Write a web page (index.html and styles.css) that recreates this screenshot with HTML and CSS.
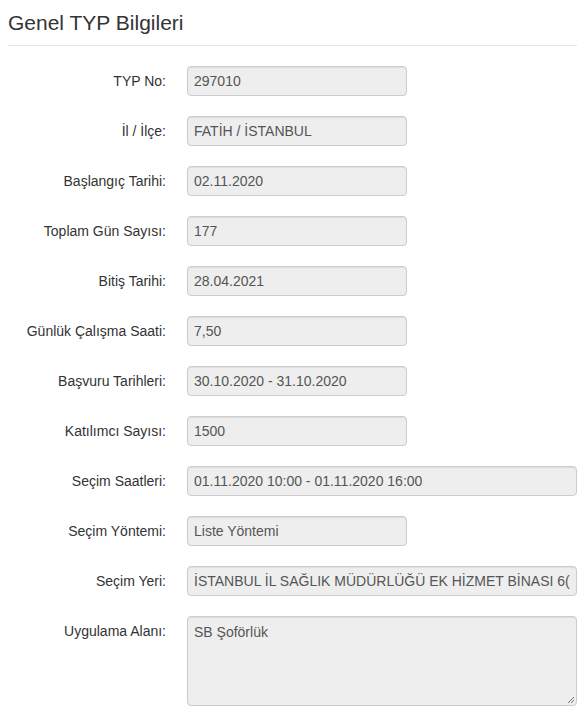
FILE: index.html
```html
<!DOCTYPE html>
<html lang="tr">
<head>
<meta charset="utf-8">
<link rel="stylesheet" href="styles.css">
</head>
<body>
<div class="panel">
  <h3 class="title">Genel TYP Bilgileri</h3>
  <div class="form">
    <label class="lbl">TYP No:</label><div class="field short">297010</div>
    <label class="lbl">İl / İlçe:</label><div class="field short">FATİH / İSTANBUL</div>
    <label class="lbl">Başlangıç Tarihi:</label><div class="field short">02.11.2020</div>
    <label class="lbl">Toplam Gün Sayısı:</label><div class="field short">177</div>
    <label class="lbl">Bitiş Tarihi:</label><div class="field short">28.04.2021</div>
    <label class="lbl">Günlük Çalışma Saati:</label><div class="field short">7,50</div>
    <label class="lbl">Başvuru Tarihleri:</label><div class="field short">30.10.2020 - 31.10.2020</div>
    <label class="lbl">Katılımcı Sayısı:</label><div class="field short">1500</div>
    <label class="lbl">Seçim Saatleri:</label><div class="field long">01.11.2020 10:00 - 01.11.2020 16:00</div>
    <label class="lbl">Seçim Yöntemi:</label><div class="field short">Liste Yöntemi</div>
    <label class="lbl">Seçim Yeri:</label><div class="field long">İSTANBUL İL SAĞLIK MÜDÜRLÜĞÜ EK HİZMET BİNASI 6(</div>
    <label class="lbl">Uygulama Alanı:</label><div class="field long area">SB Şoförlük<svg class="grip" width="8" height="8" viewBox="0 0 8 8"><path d="M7 1L1 7M7 4L4 7" stroke="#777" stroke-width="1"/></svg></div>
  </div>
</div>
</body>
</html>
```
FILE: styles.css
```css
html, body { margin: 0; padding: 0; background: #fff; }
body {
  font-family: "Liberation Sans", Arial, sans-serif;
  font-size: 14px;
  color: #333;
  padding: 0 7px 0 8px;
}
.title {
  margin: 0;
  padding: 11px 0 10px 0;
  font-size: 21px;
  font-weight: normal;
  line-height: 24px;
  color: #333;
  border-bottom: 1px solid #e5e5e5;
}
.form {
  display: grid;
  grid-template-columns: 158px 1fr;
  column-gap: 21px;
  row-gap: 20px;
  padding-top: 20px;
}
.lbl {
  text-align: right;
  line-height: 30px;
  height: 30px;
  color: #333;
}
.field {
  box-sizing: border-box;
  height: 30px;
  line-height: 18px;
  padding: 5px 6px;
  background: #eee;
  border: 1px solid #ccc;
  border-radius: 4px;
  color: #555;
  white-space: nowrap;
  overflow: hidden;
  box-shadow: inset 0 1px 1px rgba(0,0,0,0.075);
}
.short { width: 220px; }
.long { width: 390px; }
.area {
  height: 90px;
  position: relative;
  padding-top: 6px;
}
.grip {
  position: absolute;
  right: 1px;
  bottom: 1px;
}
```
